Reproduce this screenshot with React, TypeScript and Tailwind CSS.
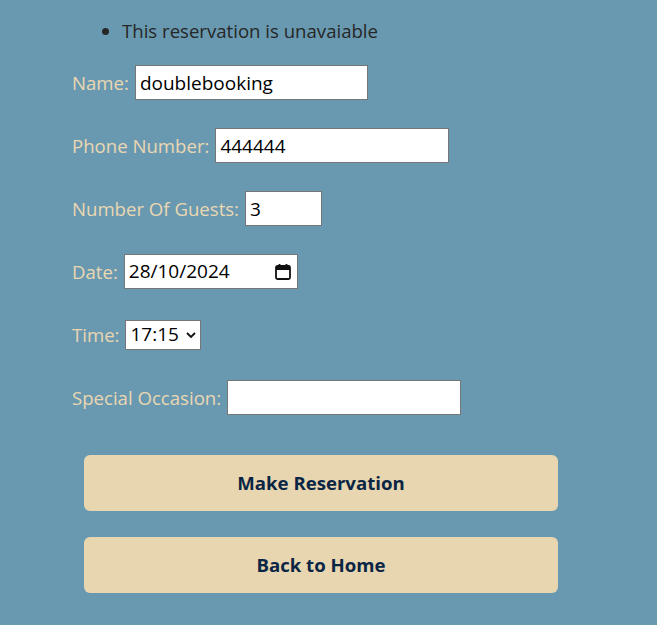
import React from "react";

const font = { fontFamily: '"Open Sans", "Noto Sans", sans-serif' };

function Row({ label, children }: { label: string; children: React.ReactNode }) {
  return (
    <div className="flex h-[35px] items-center gap-[6px]">
      <label className="text-[18.6px] text-[#ead7b2]">{label}</label>
      {children}
    </div>
  );
}

const inputCls =
  "h-[35px] border border-[#767676] bg-white px-[4px] text-[19px] text-black outline-none";

export default function App() {
  return (
    <div className="min-h-[625px] w-full bg-[#6999b0]" style={font}>
      <div className="px-[72px] pt-[19px]">
        <ul className="list-disc pl-[50px] text-[18.6px] leading-[24px] text-[#262626]">
          <li>This reservation is unavaiable</li>
        </ul>

        {/* Form */}
        <div className="mt-[22px] flex flex-col gap-[28px]">
          <Row label="Name:">
            <input className={`${inputCls} w-[233px]`} defaultValue="doublebooking" />
          </Row>
          <Row label="Phone Number:">
            <input className={`${inputCls} w-[234px]`} defaultValue="444444" />
          </Row>
          <Row label="Number Of Guests:">
            <input className={`${inputCls} w-[77px]`} defaultValue="3" />
          </Row>
          <Row label="Date:">
            <div className={`${inputCls} flex h-[34px] w-[174px] items-center justify-between`}>
              <span>28/10/2024</span>
              <svg width="18" height="18" viewBox="0 0 18 18" className="mr-[1px]">
                <rect x="2" y="3" width="14" height="13" rx="1.5" fill="none" stroke="#111" strokeWidth="1.8" />
                <rect x="2" y="3" width="14" height="4" fill="#111" />
                <line x1="5.5" y1="1" x2="5.5" y2="4" stroke="#111" strokeWidth="1.8" />
                <line x1="12.5" y1="1" x2="12.5" y2="4" stroke="#111" strokeWidth="1.8" />
              </svg>
            </div>
          </Row>
          <Row label="Time:">
            <div className="flex h-[30px] w-[76px] items-center justify-between border border-[#767676] bg-white px-[4px] text-[19px] text-black">
              <span>17:15</span>
              <svg width="10" height="8" viewBox="0 0 10 8">
                <path d="M1 2 L5 6 L9 2" fill="none" stroke="#111" strokeWidth="1.8" />
              </svg>
            </div>
          </Row>
          <Row label="Special Occasion:">
            <input className={`${inputCls} w-[234px]`} defaultValue="" />
          </Row>
        </div>

        {/* Buttons */}
        <div className="mt-[40px] flex flex-col gap-[26px] pl-[12px]">
          <button className="h-[56px] w-[474px] rounded-[6px] bg-[#e8d6b0] text-[18.6px] font-bold text-[#0b2545]">
            Make Reservation
          </button>
          <button className="h-[56px] w-[474px] rounded-[6px] bg-[#e8d6b0] text-[18.6px] font-bold text-[#0b2545]">
            Back to Home
          </button>
        </div>
      </div>
    </div>
  );
}
